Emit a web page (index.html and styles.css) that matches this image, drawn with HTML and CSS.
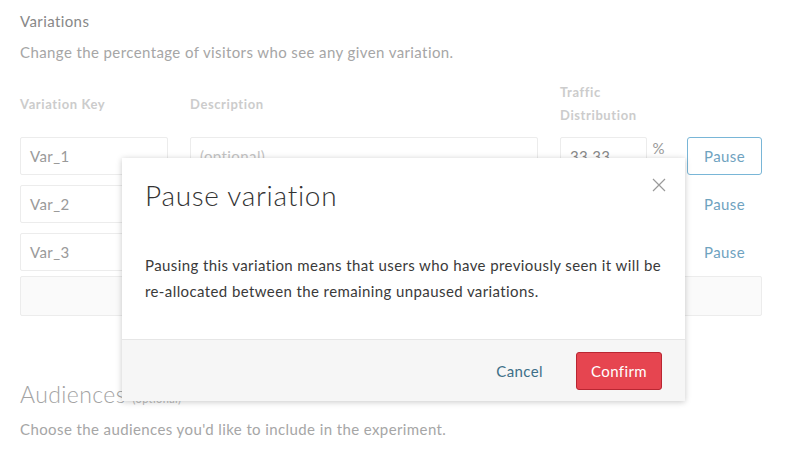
FILE: index.html
```html
<!DOCTYPE html>
<html>
<head>
<meta charset="utf-8">
<link rel="stylesheet" href="styles.css">
</head>
<body>
<div class="page">
  <section class="section">
    <h2 class="section-title">Variations</h2>
    <p class="section-sub">Change the percentage of visitors who see any given variation.</p>
    <div class="var-grid">
      <div class="col-head head-key">Variation Key</div>
      <div class="col-head head-desc">Description</div>
      <div class="col-head head-traffic">Traffic<br>Distribution</div>
      <div></div>

      <div class="field">Var_1</div>
      <div class="field placeholder">(optional)</div>
      <div class="traffic"><div class="field num">33.33</div><span class="pct">%</span></div>
      <div class="pause-cell"><button class="btn-pause outlined">Pause</button></div>

      <div class="field">Var_2</div>
      <div class="field placeholder">(optional)</div>
      <div class="traffic"><div class="field num">33.33</div><span class="pct">%</span></div>
      <div class="pause-cell"><button class="btn-pause">Pause</button></div>

      <div class="field">Var_3</div>
      <div class="field placeholder">(optional)</div>
      <div class="traffic"><div class="field num">33.33</div><span class="pct">%</span></div>
      <div class="pause-cell"><button class="btn-pause">Pause</button></div>

      <div class="add-row"></div>
    </div>
  </section>

  <section class="section audiences">
    <h2 class="aud-title">Audiences <span class="optional">(optional)</span></h2>
    <p class="section-sub">Choose the audiences you'd like to include in the experiment.</p>
  </section>
</div>

<div class="modal">
  <div class="modal-head">
    <h1 class="modal-title">Pause variation</h1>
    <svg class="modal-close" width="14" height="14" viewBox="0 0 14 14"><path d="M1 1L13 13M13 1L1 13" stroke="#9a9a9a" stroke-width="1.2" fill="none"/></svg>
  </div>
  <div class="modal-body">
    <p>Pausing this variation means that users who have previously seen it will be re-allocated between the remaining unpaused variations.</p>
  </div>
  <div class="modal-foot">
    <button class="btn-cancel">Cancel</button>
    <button class="btn-confirm">Confirm</button>
  </div>
</div>
</body>
</html>
```

FILE: styles.css
```css
* { box-sizing: border-box; }
html, body { margin: 0; padding: 0; background: #fff; }
body {
  font-family: Lato, "Noto Sans", "Liberation Sans", sans-serif;
  letter-spacing: 0.4px;
  width: 785px;
  height: 451px;
  overflow: hidden;
  position: relative;
}
.page { padding: 10px 23px 0 20px; }
.section-title {
  margin: 0;
  font-size: 15px;
  font-weight: 400;
  color: #888;
  line-height: 22px;
}
.section-sub {
  margin: 9px 0 0;
  font-size: 15px;
  color: #a6a6a6;
  line-height: 22px;
}
.var-grid {
  display: grid;
  grid-template-columns: 148px 348px 105px 75px;
  column-gap: 22px;
  margin-top: 18px;
  grid-auto-rows: auto;
}
.var-grid > .field, .var-grid > .traffic, .var-grid > .pause-cell { margin-bottom: 10px; }
.col-head {
  font-size: 13px;
  font-weight: 700;
  color: #cccccc;
  line-height: 23px;
  letter-spacing: 0.6px;
  align-self: center;
  margin-bottom: 10px;
}
.field {
  height: 38px;
  border: 1px solid #ececec;
  border-radius: 2px;
  padding: 0 9px;
  font-size: 15px;
  line-height: 36px;
  color: #9a9a9a;
  background: #fff;
}
.field.placeholder { color: #c4c4c4; }
.traffic { display: flex; align-items: flex-start; }
.field.num { width: 87px; color: #888; }
.pct { margin-left: 6px; font-size: 15px; color: #999; line-height: 22px; }
.pause-cell { display: flex; }
.btn-pause {
  width: 75px;
  height: 38px;
  font-family: inherit;
  letter-spacing: 0.4px;
  font-size: 15px;
  color: #6fa3bf;
  background: #fff;
  border: 1px solid transparent;
  border-radius: 3px;
  padding: 0;
}
.btn-pause.outlined { border-color: #79b6d7; }
.add-row {
  grid-column: 1 / -1;
  height: 40px;
  margin-top: -5px;
  background: #fafafa;
  border: 1px solid #ececec;
  border-radius: 2px;
}
.audiences { margin-top: 64px; }
.aud-title {
  margin: 0;
  font-size: 23px;
  font-weight: 300;
  color: #a3a3a3;
  line-height: 28px;
}
.optional { font-size: 11px; color: #bbb; font-weight: 400; }
.audiences .section-sub { margin-top: 5px; }

.modal {
  position: absolute;
  left: 122px;
  top: 158px;
  width: 563px;
  height: 243px;
  background: #fff;
  box-shadow: 0 1px 6px rgba(0,0,0,0.22);
  display: flex;
  flex-direction: column;
}
.modal-head {
  display: flex;
  justify-content: space-between;
  align-items: flex-start;
  padding: 20px 19px 0 23px;
}
.modal-title {
  margin: 0;
  font-size: 28px;
  font-weight: 300;
  letter-spacing: 0.7px;
  color: #333;
  line-height: 34px;
}
.modal-close { margin-top: 0; }
.modal-body { padding: 0 23px; flex: 1; }
.modal-body p {
  margin: 40px 0 0;
  font-size: 15px;
  line-height: 26px;
  color: #3a3a3a;
}
.modal-foot {
  height: 62px;
  background: #f6f6f6;
  border-top: 1px solid #e6e6e6;
  display: flex;
  justify-content: flex-end;
  align-items: center;
  gap: 33px;
  padding-right: 23px;
}
.btn-cancel {
  background: none;
  border: none;
  padding: 0;
  font-family: inherit;
  letter-spacing: 0.4px;
  font-size: 15px;
  color: #3d6f88;
}
.btn-confirm {
  width: 86px;
  height: 38px;
  background: #e64550;
  border: 1px solid #b92632;
  border-radius: 3px;
  font-family: inherit;
  letter-spacing: 0.4px;
  font-size: 15px;
  color: #fff;
}
```
